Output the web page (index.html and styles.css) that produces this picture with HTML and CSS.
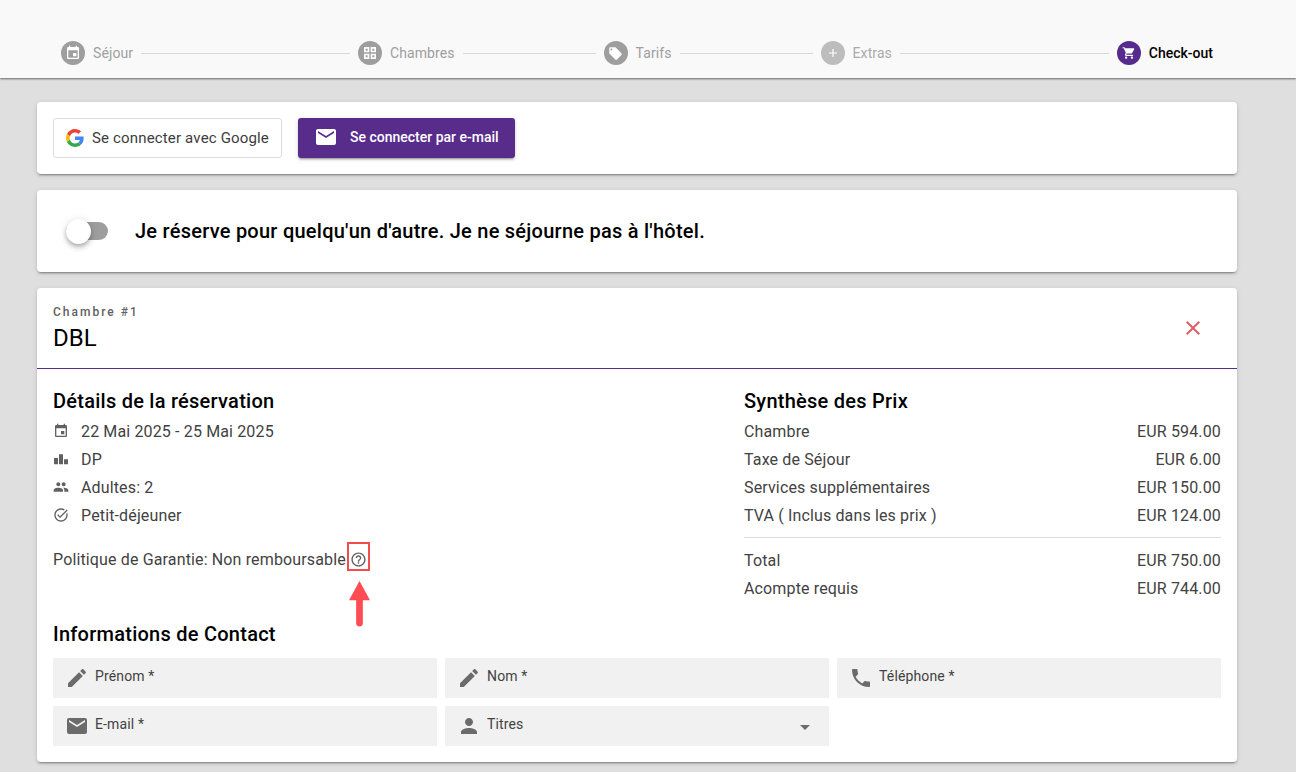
FILE: index.html
```html
<!DOCTYPE html>
<html lang="fr">
<head>
<meta charset="utf-8">
<title>Check-out</title>
<link rel="stylesheet" href="styles.css">
</head>
<body>
<header class="stepper">
  <div class="step"><span class="step-icon"><svg viewBox="0 0 24 24" class="si si-lg"><path d="M17 12h-5v5h5v-5zM16 1v2H8V1H6v2H5c-1.110 0-2 .9-2 2v14c0 1.100.89 2 2 2h14c1.100 0 2-.9 2-2V5c0-1.100-.9-2-2-2h-1V1h-2zm3 18H5V8h14v11z"/></svg></span><span class="step-label">Séjour</span></div>
  <span class="line line-long"></span>
  <div class="step"><span class="step-icon"><svg viewBox="0 0 24 24" class="si si-lg"><path d="M3 3h8v8H3zM13 3h8v8h-8zM3 13h8v8H3zM13 13h8v8h-8zM5.500 5.500v3h3v-3zM15.500 5.500v3h3v-3zM5.500 15.500v3h3v-3zM15.500 15.500v3h3v-3z" fill-rule="evenodd"/></svg></span><span class="step-label">Chambres</span></div>
  <span class="line line-short"></span>
  <div class="step"><span class="step-icon"><svg viewBox="0 0 24 24" class="si si-md"><path d="M21.410 11.580l-9-9C12.050 2.220 11.550 2 11 2H4c-1.100 0-2 .9-2 2v7c0 .55.22 1.050.59 1.420l9 9c.36.36.86.58 1.410.58.55 0 1.050-.22 1.410-.59l7-7c.37-.36.59-.86.59-1.410 0-.55-.23-1.060-.59-1.420zM5.500 7C4.670 7 4 6.330 4 5.500S4.670 4 5.500 4 7 4.670 7 5.500 6.330 7 5.500 7z"/></svg></span><span class="step-label">Tarifs</span></div>
  <span class="line line-short"></span>
  <div class="step step-faint"><span class="step-icon"><svg viewBox="0 0 24 24" class="si"><path d="M19 13h-6v6h-2v-6H5v-2h6V5h2v6h6v2z"/></svg></span><span class="step-label">Extras</span></div>
  <span class="line line-long"></span>
  <div class="step step-active"><span class="step-icon"><svg viewBox="0 0 24 24" class="si"><path d="M7 18c-1.100 0-1.990.9-1.990 2S5.900 22 7 22s2-.9 2-2-.9-2-2-2zM1 2v2h2l3.600 7.590-1.350 2.450c-.16.28-.25.61-.25.96 0 1.100.9 2 2 2h12v-2H7.420c-.14 0-.25-.11-.25-.25l.03-.12.9-1.630h7.450c.75 0 1.410-.41 1.750-1.030l3.580-6.490c.08-.14.12-.31.12-.48 0-.55-.45-1-1-1H5.210l-.94-2H1zm16 16c-1.100 0-1.990.9-1.990 2s.89 2 1.990 2 2-.9 2-2-.9-2-2-2z"/></svg></span><span class="step-label">Check-out</span></div>
</header>

<main class="page">
  <section class="card login">
    <button class="btn btn-google">
      <svg viewBox="0 0 48 48" class="g-logo"><path fill="#EA4335" d="M24 9.500c3.540 0 6.710 1.220 9.210 3.600l6.850-6.850C35.900 2.380 30.470 0 24 0 14.620 0 6.510 5.380 2.560 13.220l7.980 6.190C12.430 13.720 17.740 9.500 24 9.500z"/><path fill="#4285F4" d="M46.980 24.550c0-1.570-.15-3.090-.38-4.550H24v9.020h12.940c-.58 2.960-2.260 5.480-4.780 7.180l7.730 6c4.510-4.180 7.090-10.360 7.090-17.650z"/><path fill="#FBBC05" d="M10.530 28.590c-.48-1.450-.76-2.990-.76-4.590s.27-3.140.76-4.590l-7.980-6.190C.92 16.460 0 20.120 0 24c0 3.880.92 7.540 2.560 10.780l7.970-6.190z"/><path fill="#34A853" d="M24 48c6.480 0 11.930-2.130 15.890-5.810l-7.730-6c-2.150 1.450-4.920 2.300-8.160 2.300-6.260 0-11.570-4.220-13.470-9.910l-7.980 6.190C6.510 42.620 14.620 48 24 48z"/></svg>
      <span>Se connecter avec Google</span>
    </button>
    <button class="btn btn-mail">
      <svg viewBox="0 0 24 24" class="mail-logo"><path d="M20 4H4c-1.100 0-1.990.9-1.990 2L2 18c0 1.100.9 2 2 2h16c1.100 0 2-.9 2-2V6c0-1.100-.9-2-2-2zm0 4l-8 5-8-5V6l8 5 8-5v2z"/></svg>
      <span>Se connecter par e-mail</span>
    </button>
  </section>

  <section class="card other">
    <span class="switch"><span class="switch-thumb"></span></span>
    <span class="other-text">Je réserve pour quelqu'un d'autre. Je ne séjourne pas à l'hôtel.</span>
  </section>

  <section class="card room">
    <div class="room-head">
      <div>
        <div class="room-kicker">Chambre #1</div>
        <div class="room-name">DBL</div>
      </div>
      <svg viewBox="0 0 14 14" class="close"><path d="M14 1.410L12.590 0 7 5.590 1.410 0 0 1.410 5.590 7 0 12.590 1.410 14 7 8.410 12.590 14 14 12.590 8.410 7z"/></svg>
    </div>
    <div class="room-body">
      <div class="summary">
        <div>
          <h2 class="heading">Détails de la réservation</h2>
          <ul class="facts">
            <li><svg viewBox="0 0 24 24" class="fact-icon"><path d="M17 12h-5v5h5v-5zM16 1v2H8V1H6v2H5c-1.110 0-2 .9-2 2v14c0 1.100.89 2 2 2h14c1.100 0 2-.9 2-2V5c0-1.100-.9-2-2-2h-1V1h-2zm3 18H5V8h14v11z"/></svg>22 Mai 2025 - 25 Mai 2025</li>
            <li><svg viewBox="0 0 24 24" class="fact-icon"><path d="M1.500 10.500h6V20h-6zM9 5h6v15H9zM16.500 12.500h6V20h-6z"/></svg>DP</li>
            <li><svg viewBox="0 0 24 24" class="fact-icon"><path d="M16 11c1.660 0 2.990-1.340 2.990-3S17.660 5 16 5c-1.660 0-3 1.340-3 3s1.340 3 3 3zm-8 0c1.660 0 2.990-1.340 2.990-3S9.660 5 8 5C6.340 5 5 6.340 5 8s1.340 3 3 3zm0 2c-2.330 0-7 1.170-7 3.500V19h14v-2.500c0-2.330-4.670-3.500-7-3.500zm8 0c-.29 0-.62.02-.97.05 1.160.84 1.970 1.970 1.970 3.450V19h6v-2.500c0-2.330-4.670-3.500-7-3.500z"/></svg>Adultes: 2</li>
            <li><svg viewBox="0 0 24 24" class="fact-icon"><path d="M22 5.180 10.590 16.600l-4.240-4.240 1.410-1.410 2.830 2.830 10-10L22 5.180zM19.790 10.220c.13.570.21 1.170.21 1.780 0 4.420-3.580 8-8 8s-8-3.580-8-8 3.580-8 8-8c1.580 0 3.040.46 4.280 1.250l1.440-1.440C16.100 2.670 14.130 2 12 2 6.480 2 2 6.480 2 12s4.480 10 10 10 10-4.480 10-10c0-1.190-.22-2.330-.6-3.390l-1.610 1.610z"/></svg>Petit-déjeuner</li>
          </ul>
          <p class="policy">Politique de Garantie: Non remboursable<svg viewBox="0 0 24 24" class="help"><path d="M11 18h2v-2h-2v2zm1-16C6.480 2 2 6.480 2 12s4.480 10 10 10 10-4.480 10-10S17.520 2 12 2zm0 18c-4.410 0-8-3.590-8-8s3.590-8 8-8 8 3.590 8 8-3.590 8-8 8zm0-14c-2.210 0-4 1.790-4 4h2c0-1.100.9-2 2-2s2 .9 2 2c0 2-3 1.750-3 5h2c0-2.250 3-2.500 3-5 0-2.210-1.790-4-4-4z"/></svg></p>
        </div>
        <div>
          <h2 class="heading">Synthèse des Prix</h2>
          <div class="price"><span>Chambre</span><span>EUR 594.00</span></div>
          <div class="price"><span>Taxe de Séjour</span><span>EUR 6.00</span></div>
          <div class="price"><span>Services supplémentaires</span><span>EUR 150.00</span></div>
          <div class="price"><span>TVA ( Inclus dans les prix )</span><span>EUR 124.00</span></div>
          <hr class="rule">
          <div class="price"><span>Total</span><span>EUR 750.00</span></div>
          <div class="price"><span>Acompte requis</span><span>EUR 744.00</span></div>
        </div>
      </div>
      <h2 class="heading contact-heading">Informations de Contact</h2>
      <div class="fields">
        <div class="field"><svg viewBox="0 0 24 24" class="field-icon"><path d="M3 17.250V21h3.750L17.810 9.940l-3.750-3.750L3 17.250zM20.710 7.040c.39-.39.39-1.020 0-1.410l-2.340-2.340c-.39-.39-1.020-.39-1.410 0l-1.830 1.830 3.750 3.750 1.830-1.830z"/></svg><span>Prénom *</span></div>
        <div class="field"><svg viewBox="0 0 24 24" class="field-icon"><path d="M3 17.250V21h3.750L17.810 9.940l-3.750-3.750L3 17.250zM20.710 7.040c.39-.39.39-1.020 0-1.410l-2.340-2.340c-.39-.39-1.020-.39-1.410 0l-1.830 1.830 3.750 3.750 1.830-1.830z"/></svg><span>Nom *</span></div>
        <div class="field"><svg viewBox="0 0 24 24" class="field-icon"><path d="M6.620 10.790c1.440 2.830 3.760 5.140 6.590 6.590l2.200-2.200c.27-.27.67-.36 1.020-.24 1.120.37 2.330.57 3.570.57.55 0 1 .45 1 1V20c0 .55-.45 1-1 1-9.390 0-17-7.610-17-17 0-.55.45-1 1-1h3.500c.55 0 1 .45 1 1 0 1.250.2 2.450.57 3.570.11.35.03.74-.25 1.020l-2.200 2.200z"/></svg><span>Téléphone *</span></div>
        <div class="field"><svg viewBox="0 0 24 24" class="field-icon"><path d="M20 4H4c-1.100 0-1.990.9-1.990 2L2 18c0 1.100.9 2 2 2h16c1.100 0 2-.9 2-2V6c0-1.100-.9-2-2-2zm0 4l-8 5-8-5V6l8 5 8-5v2z"/></svg><span>E-mail *</span></div>
        <div class="field"><svg viewBox="0 0 24 24" class="field-icon"><path d="M12 12c2.210 0 4-1.790 4-4s-1.790-4-4-4-4 1.790-4 4 1.790 4 4 4zm0 2c-2.670 0-8 1.340-8 4v2h16v-2c0-2.660-5.330-4-8-4z"/></svg><span>Titres</span><svg viewBox="0 0 24 24" class="caret"><path d="M7 10l5 5 5-5z"/></svg></div>
      </div>
    </div>
    <span class="mark-box"></span>
    <svg viewBox="0 0 22 48" class="mark-arrow"><path d="M11 0 22 20H14.500V44a3.500 3.500 0 0 1-7 0V20H0z"/></svg>
  </section>
</main>
</body>
</html>
```

FILE: styles.css
```css
* { box-sizing: border-box; }
html, body { height: 100%; }
body {
  margin: 0;
  height: 772px;
  overflow: hidden;
  background: #dfdfdf;
  font-family: Roboto, "Liberation Sans", sans-serif;
  font-size: 16px;
  color: #424242;
}
.stepper {
  height: 78px;
  padding: 41px 83px 0 61px;
  display: flex;
  align-items: flex-start;
  background: #f9f9f9;
  box-shadow: 0 1px 2px rgba(0,0,0,.55);
  position: relative;
}
.step { display: flex; align-items: center; height: 24px; gap: 8px; flex: none; }
.step-icon {
  width: 24px; height: 24px; border-radius: 50%;
  background: #9e9e9e;
  display: flex; align-items: center; justify-content: center;
}
.si { width: 14px; height: 14px; fill: #fff; display: block; }
.si-lg { width: 16px; height: 16px; }
.si-md { width: 15px; height: 15px; }
.step-label { font-size: 14px; color: #9e9e9e; letter-spacing: .1px; }
.step-faint .step-icon { background: #bdbdbd; }
.step-faint .step-label { color: #aaa; }
.step-active .step-icon { background: #562b8c; }
.step-active .step-label { color: #000; font-weight: 500; letter-spacing: 0; }
.line { height: 1px; background: #d8d8d8; margin: 12px 8px 0; flex: 1 1 0; }
.line-long { flex-grow: 209; }
.line-short { flex-grow: 133; }

.page {
  width: 1200px;
  margin-left: 37px;
  padding-top: 24px;
  display: flex;
  flex-direction: column;
  gap: 16px;
}
.card {
  background: #fff;
  border-radius: 4px;
  box-shadow: 0 3px 1px -2px rgba(0,0,0,.2), 0 2px 2px 0 rgba(0,0,0,.14), 0 1px 5px 0 rgba(0,0,0,.12);
}
.login { height: 72px; padding: 16px; display: flex; gap: 16px; }
.btn {
  height: 40px;
  border-radius: 3px;
  font-family: inherit;
  display: flex;
  align-items: center;
  cursor: pointer;
}
.btn-google {
  width: 229px;
  padding: 0 12px;
  gap: 8px;
  background: #fff;
  border: 1px solid #dcdcdc;
  font-size: 15px;
  color: #3c3c3c;
  letter-spacing: .16px;
}
.g-logo { width: 18px; height: 18px; flex: none; }
.btn-mail {
  width: 217px;
  padding: 0 0 2px 16px;
  gap: 12px;
  background: #582c8b;
  border: 0;
  color: #fff;
  font-size: 14px;
  font-weight: 500;
  box-shadow: 0 3px 1px -2px rgba(0,0,0,.2), 0 2px 2px 0 rgba(0,0,0,.14), 0 1px 5px 0 rgba(0,0,0,.12);
}
.mail-logo { width: 24px; height: 24px; fill: #fff; flex: none; }

.other { height: 82px; padding: 0 0 0 29px; display: flex; align-items: center; gap: 27px; }
.switch { display: block; width: 42px; height: 18px; border-radius: 9px; background: #9e9e9e; position: relative; flex: none; }
.switch-thumb {
  position: absolute; left: 0; top: -3px;
  width: 25px; height: 25px; border-radius: 50%;
  background: #fff;
  box-shadow: 0 2px 4px -1px rgba(0,0,0,.2), 0 4px 5px 0 rgba(0,0,0,.14), 0 1px 10px 0 rgba(0,0,0,.12);
}
.other-text { font-size: 20px; font-weight: 500; color: #000; letter-spacing: .25px; }

.room { height: 474px; position: relative; }
.room-head {
  height: 81px;
  padding: 17px 37px 0 16px;
  border-bottom: 1px solid #582c8b;
  display: flex;
  justify-content: space-between;
  align-items: flex-start;
}
.room-kicker { font-size: 12px; line-height: 14px; letter-spacing: 2px; font-weight: 500; color: #616161; }
.room-name { font-size: 24px; line-height: 28px; color: #000; margin-top: 5px; }
.close { width: 14px; height: 14px; fill: #e35d60; margin-top: 16px; }
.room-body { padding: 20px 16px 0; letter-spacing: .14px; }
.summary { display: grid; grid-template-columns: 691px 1fr; }
.heading { margin: 0; font-size: 20px; line-height: 24px; font-weight: 500; color: #000; letter-spacing: .25px; }
.facts { list-style: none; margin: 4px 0 0; padding: 0; }
.facts li { height: 28px; display: flex; align-items: center; gap: 12px; }
.fact-icon { width: 16px; height: 16px; fill: #616161; flex: none; }
.policy { margin: 16px 0 0; height: 28px; display: flex; align-items: center; }
.help { width: 17px; height: 17px; fill: #616161; margin-left: 4px; }
.price { height: 28px; display: flex; align-items: center; justify-content: space-between; }
.heading + .price { margin-top: 4px; }
.rule { border: 0; border-top: 1px solid #dcdcdc; margin: 8px 0; }
.contact-heading { margin-top: 20px; }
.fields { margin-top: 12px; display: grid; grid-template-columns: repeat(3, 1fr); gap: 8px; }
.field {
  height: 40px;
  background: #f1f1f1;
  padding: 8px 12px;
  display: flex;
  align-items: flex-start;
  gap: 6px;
  font-size: 14px;
  line-height: 20px;
}
.field-icon { width: 24px; height: 24px; fill: #6b6b6b; flex: none; }
.field span { flex: 1; }
.caret { width: 24px; height: 24px; fill: #6b6b6b; flex: none; margin-top: 1px; }

.mark-box {
  position: absolute; left: 310px; top: 254px;
  width: 23px; height: 29px;
  border: 2px solid #f44b4f;
}
.mark-arrow {
  position: absolute; left: 312px; top: 292px;
  width: 21px; height: 48px;
  fill: #ff4b52;
}
```
